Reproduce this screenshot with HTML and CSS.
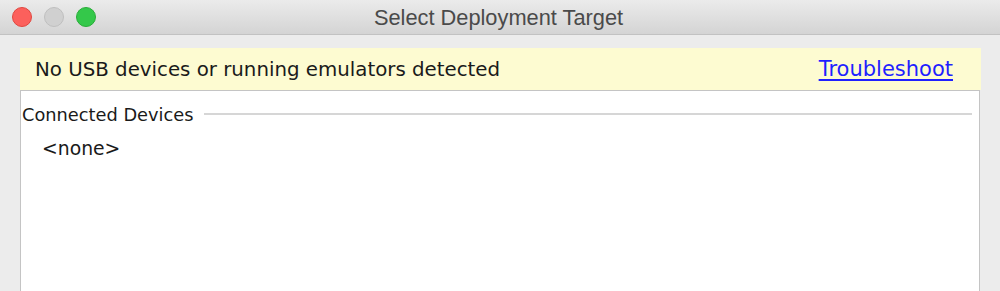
FILE: index.html
```html
<!DOCTYPE html>
<html>
<head>
<meta charset="utf-8">
<link rel="stylesheet" href="styles.css">
</head>
<body>
<div class="window">
  <div class="titlebar">
    <div class="lights">
      <span class="light red"></span>
      <span class="light gray"></span>
      <span class="light green"></span>
    </div>
    <div class="title">Select Deployment Target</div>
  </div>
  <div class="content">
    <div class="banner">
      <span class="banner-text">No USB devices or running emulators detected</span>
      <a class="link" href="#">Troubleshoot</a>
    </div>
    <div class="panel">
      <div class="group-header">
        <span class="group-title">Connected Devices</span>
        <span class="group-line"></span>
      </div>
      <div class="device">&lt;none&gt;</div>
    </div>
  </div>
</div>
</body>
</html>
```
FILE: styles.css
```css
html, body {
  margin: 0;
  padding: 0;
  height: 100%;
}
body {
  background: #ececec;
  font-family: "DejaVu Sans", "Liberation Sans", sans-serif;
  color: #1a1a1a;
  overflow: hidden;
}
.window {
  display: flex;
  flex-direction: column;
  height: 291px;
}
.titlebar {
  position: relative;
  height: 34px;
  flex: 0 0 auto;
  background: linear-gradient(#ebebeb, #d4d4d4);
  border-bottom: 1px solid #c2c2c2;
  display: flex;
  align-items: center;
  justify-content: center;
}
.lights {
  position: absolute;
  left: 12px;
  top: 7px;
  display: flex;
  gap: 12px;
}
.light {
  width: 20px;
  height: 20px;
  border-radius: 50%;
  box-sizing: border-box;
  display: block;
}
.red { background: #fc605c; border: 1px solid #e0473f; }
.gray { background: #d0d0d0; border: 1px solid #bfbfbf; }
.green { background: #34c84a; border: 1px solid #29ad38; }
.title {
  font-family: "Liberation Sans", Arial, sans-serif;
  font-size: 21.8px;
  color: #4a4a4a;
  margin-top: 1px;
  margin-left: -3px;
}
.content {
  flex: 1 1 auto;
  display: flex;
  flex-direction: column;
  padding: 13px 19px 0 20px;
  min-height: 0;
}
.banner {
  height: 42px;
  flex: 0 0 auto;
  background: #fdfbd1;
  display: flex;
  align-items: center;
  justify-content: space-between;
  padding: 0 28px 0 15px;
}
.banner-text {
  font-size: 19.8px;
  color: #1a1a1a;
}
.link {
  font-size: 21px;
  color: #1f1fff;
  text-decoration: underline;
  text-underline-offset: 3px;
}
.panel {
  flex: 1 1 auto;
  background: #fff;
  border: 1px solid #c4c4c4;
  border-bottom: none;
  margin-right: 1px;
  padding: 13px 7px 0 1px;
}
.group-header {
  display: flex;
  align-items: flex-start;
}
.group-title {
  font-size: 17.8px;
  color: #1a1a1a;
}
.group-line {
  flex: 1 1 auto;
  height: 2px;
  background: #d6d6d6;
  margin: 9px 0 0 11px;
}
.device {
  font-size: 18.8px;
  color: #1a1a1a;
  padding: 13px 0 0 20px;
}
```
